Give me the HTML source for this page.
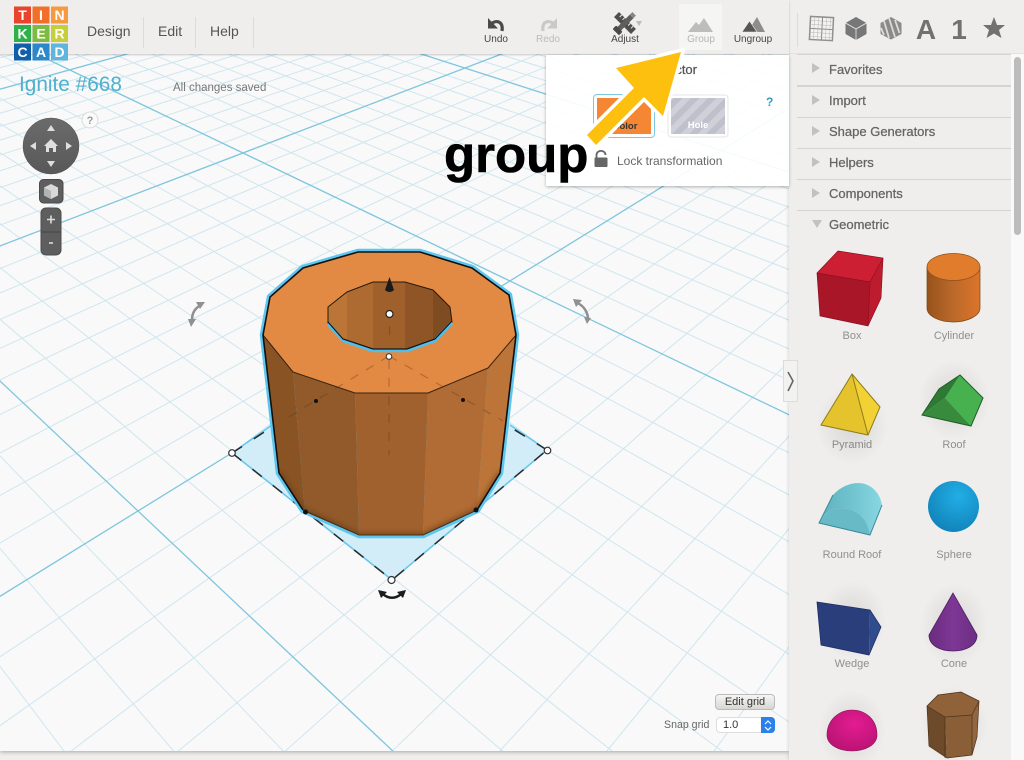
<!DOCTYPE html>
<html><head><meta charset="utf-8"><title>Tinkercad</title>
<style>
html,body{margin:0;padding:0;background:#efeeec;width:1024px;height:760px;overflow:hidden}
body{font-family:"Liberation Sans",sans-serif;position:relative;color:#555}
.t{position:absolute;white-space:nowrap;line-height:1}
.c{transform:translateX(-50%)}
.lbl{font-size:11px;color:#8f8f8f}
.tool{font-size:10px;color:#444}
.menu{font-size:14px;color:#555}
.div{position:absolute;background:#dcdbd9;width:1px}
.item{font-size:13px;color:#646464;left:829px;-webkit-text-stroke:.25px #646464}
.hr{position:absolute;left:797px;width:214px;height:1px;background:#d5d4d2}
.tri{position:absolute;left:812px;width:0;height:0;border-left:8px solid #c2c1bf;border-top:5px solid transparent;border-bottom:5px solid transparent}
.abs{position:absolute;left:0;top:0}
</style></head><body>
<!-- canvas -->
<div style="position:absolute;left:0;top:54px;width:789px;height:697px;background:#f9f9f9;box-shadow:0 1px 4px rgba(0,0,0,.3)"></div>
<svg class="abs" width="1024" height="760" style="clip-path:inset(54px 235px 9px 0)">
<g id="minor" stroke="#cfe6ef" stroke-width="1" fill="none"></g>
<g id="major" stroke="#7ec5de" stroke-width="1.3" fill="none"></g>
</svg>

<!-- sidebar -->
<div style="position:absolute;left:789px;top:54px;width:235px;height:706px;background:#efeeec;box-shadow:-1px 0 3px rgba(0,0,0,.12)"></div>
<div style="position:absolute;left:1011px;top:54px;width:13px;height:706px;background:#f9f9f9"></div>
<div style="position:absolute;left:1014px;top:57px;width:7px;height:178px;background:#bcbcbc;border-radius:4px"></div>
<div class="hr" style="top:54px"></div><div class="hr" style="top:85px;height:2px"></div><div class="hr" style="top:117px"></div><div class="hr" style="top:148px"></div><div class="hr" style="top:179px"></div><div class="hr" style="top:210px"></div>
<div class="tri" style="top:63px"></div><div class="tri" style="top:95px"></div><div class="tri" style="top:126px"></div><div class="tri" style="top:157px"></div><div class="tri" style="top:188px"></div>
<div style="position:absolute;left:812px;top:220px;width:0;height:0;border-top:8px solid #c2c1bf;border-left:5px solid transparent;border-right:5px solid transparent"></div>
<div class="t item" style="top:63px">Favorites</div>
<div class="t item" style="top:94px">Import</div>
<div class="t item" style="top:125px">Shape Generators</div>
<div class="t item" style="top:156px">Helpers</div>
<div class="t item" style="top:187px">Components</div>
<div class="t item" style="top:218px">Geometric</div>
<div class="t lbl c" style="left:852px;top:331px">Box</div>
<div class="t lbl c" style="left:954px;top:331px">Cylinder</div>
<div class="t lbl c" style="left:852px;top:440px">Pyramid</div>
<div class="t lbl c" style="left:954px;top:440px">Roof</div>
<div class="t lbl c" style="left:852px;top:550px">Round Roof</div>
<div class="t lbl c" style="left:954px;top:550px">Sphere</div>
<div class="t lbl c" style="left:852px;top:659px">Wedge</div>
<div class="t lbl c" style="left:954px;top:659px">Cone</div>

<!-- header -->
<div style="position:absolute;left:0;top:0;width:1024px;height:54px;background:#efeeec;border-bottom:1px solid #e2e1df;box-sizing:border-box"></div>
<div style="position:absolute;left:0;top:0;width:789px;height:54px;background:#efeeec;box-shadow:0 1px 2px rgba(0,0,0,.2)"></div>
<div style="position:absolute;left:679px;top:4px;width:43px;height:46px;background:#f5f5f4"></div>
<div class="div" style="left:143px;top:17px;height:31px"></div>
<div class="div" style="left:195px;top:17px;height:31px"></div>
<div class="div" style="left:253px;top:17px;height:31px"></div>
<div class="div" style="left:797px;top:13px;height:34px"></div>
<div class="t menu" style="left:87px;top:24px">Design</div>
<div class="t menu" style="left:158px;top:24px">Edit</div>
<div class="t menu" style="left:210px;top:24px">Help</div>
<div class="t tool c" style="left:496px;top:35px">Undo</div>
<div class="t tool c" style="left:548px;top:35px;color:#bbb">Redo</div>
<div class="t tool c" style="left:625px;top:35px">Adjust</div>
<div class="t tool c" style="left:701px;top:35px;color:#b5b5b5">Group</div>
<div class="t tool c" style="left:753px;top:35px">Ungroup</div>
<div class="t" style="left:19px;top:75px;font-size:20.8px;color:#4fb1cd">Ignite #668</div>
<div class="t" style="left:173px;top:83px;font-size:11.5px;color:#777">All changes saved</div>

<!-- logo -->
<svg class="abs" width="80" height="64" style="font-family:'Liberation Sans',sans-serif;font-weight:bold;font-size:14px" text-anchor="middle" fill="#fff">
<rect x="14" y="6.5" width="17" height="17" fill="#e8442c"/><rect x="32.5" y="6.5" width="17" height="17" fill="#f26f2a"/><rect x="51" y="6.5" width="17" height="17" fill="#f59a3f"/>
<rect x="14" y="25" width="17" height="17" fill="#2eb14b"/><rect x="32.5" y="25" width="17" height="17" fill="#7fbb42"/><rect x="51" y="25" width="17" height="17" fill="#c5cf3a"/>
<rect x="14" y="43.5" width="17" height="17" fill="#0f60a9"/><rect x="32.5" y="43.5" width="17" height="17" fill="#2b88c9"/><rect x="51" y="43.5" width="17" height="17" fill="#5fb5dc"/>
<text x="22.5" y="20">T</text><text x="41" y="20">I</text><text x="59.5" y="20">N</text>
<text x="22.5" y="38.5">K</text><text x="41" y="38.5">E</text><text x="59.5" y="38.5">R</text>
<text x="22.5" y="57">C</text><text x="41" y="57">A</text><text x="59.5" y="57">D</text>
</svg>

<!-- toolbar icons, nav, model, sidebar shapes -->
<svg class="abs" width="1024" height="760">
<defs>
<radialGradient id="halo"><stop offset="0" stop-color="#000" stop-opacity=".1"/><stop offset="1" stop-color="#000" stop-opacity="0"/></radialGradient>
<linearGradient id="cyl"><stop offset="0" stop-color="#96521b"/><stop offset=".45" stop-color="#b8682a"/><stop offset="1" stop-color="#dc742a"/></linearGradient>
<linearGradient id="rr"><stop offset="0" stop-color="#5fb0bd"/><stop offset=".5" stop-color="#6fc3cf"/><stop offset="1" stop-color="#88d7e1"/></linearGradient>
<radialGradient id="sph" cx=".6" cy=".3" r=".8"><stop offset="0" stop-color="#22aee6"/><stop offset="1" stop-color="#0f7fb5"/></radialGradient>
<radialGradient id="dome" cx=".55" cy=".35" r=".75"><stop offset="0" stop-color="#e41c92"/><stop offset="1" stop-color="#b3126f"/></radialGradient>
<linearGradient id="cone"><stop offset="0" stop-color="#6a2c80"/><stop offset=".5" stop-color="#7d3794"/><stop offset="1" stop-color="#6c2e84"/></linearGradient>
<linearGradient id="nav" x1="0" y1="0" x2="0" y2="1"><stop offset="0" stop-color="#6b6b6b"/><stop offset="1" stop-color="#585858"/></linearGradient>
<pattern id="stripe" width="12" height="12" patternUnits="userSpaceOnUse" patternTransform="rotate(45)"><rect width="12" height="12" fill="#bfc0cb"/><rect width="6" height="12" fill="#cfd0d8"/></pattern>
<clipPath id="hole"><polygon points="328,307 347,292 373,282 405,282 433,290 450,307 452,322 435,340 407,350 373,350 343,340 328,323"/></clipPath>
<filter id="soft"><feGaussianBlur stdDeviation="2.500"/></filter>
<clipPath id="bodyclip"><polygon points="263,335 516,335 500,473 477,510 423,535 359,535 303,510 279,473"/></clipPath>
</defs>

<!-- undo -->
<polygon points="488,18 488,28.500 498,28.500" fill="#4a4a4a"/>
<path d="M491 24 C496 19.500 503.500 21 502 31" stroke="#4a4a4a" stroke-width="3.200" fill="none"/>
<!-- redo -->
<polygon points="557,18 557,28.500 547,28.500" fill="#c9c9c7"/>
<path d="M554 24 C549 19.500 541.500 21 543 31" stroke="#c9c9c7" stroke-width="3.200" fill="none"/>
<!-- adjust -->
<g transform="translate(625,23)">
<g transform="rotate(45)"><rect x="-12" y="-3.5" width="24" height="7" fill="#4f4f4f"/><path d="M-8-3.5v3M-4-3.5v3M0-3.5v3M4-3.5v3M8-3.5v3" stroke="#efeeec" stroke-width="1"/></g>
<g transform="rotate(-45)"><rect x="-10" y="-2.5" width="20" height="5" fill="#5e5e5e"/><rect x="-13" y="-4.5" width="5" height="9" rx="1" fill="#4a4a4a"/><rect x="9" y="-2.5" width="4" height="5" fill="#888"/></g>
</g>
<path d="M636 21 h6 l-3 5z" fill="#bbb"/>
<!-- group -->
<path d="M688 32 L696 22 L699 25 L704 18 L713 32 Z" fill="#bdbdbc"/>
<!-- ungroup -->
<path d="M757 17 L765 32 L748 32 L752 25 Z" fill="#8d8d8d"/>
<path d="M742 32 L749.500 21 L757 32Z" fill="#565656" stroke="#efeeec" stroke-width=".6"/>
<!-- right icons -->
<g transform="translate(810,17) rotate(3 11 11)" fill="#f3f2f0" stroke="#8e8e8e">
<rect x="0" y="0" width="23" height="23" stroke-width="1.5"/>
<path d="M4 0v23M8 0v23M12 0v23M16 0v23M20 0v23M0 4h23M0 8h23M0 12h23M0 16h23M0 20h23" stroke-width=".5" stroke="#b5b5b5" fill="none"/>
<path d="M12 0v23M0 12h23" stroke-width="1" fill="none"/>
</g>
<path d="M856 17 L866.5 23 L866.5 34 L856 40 L845.5 34 L845.5 23Z" fill="#777"/>
<path d="M845.5 23 L856 29 L866.5 23 M856 29 V40" stroke="#efeeec" stroke-width=".8" fill="none"/>
<path d="M891 17 L901.500 23 L901.500 34 L891 39.500 L880.500 34 L880.500 23Z" fill="#8a8a8a"/>
<path d="M884 21 L889 38 M889 18 L895 37 M895 20 L899.500 33 M881 28 L884 35" stroke="#dcdbd9" stroke-width="1.800" fill="none"/>
<text x="926" y="39" font-family="Liberation Sans" font-weight="bold" font-size="28" fill="#717171" text-anchor="middle">A</text>
<text x="959" y="39" font-family="Liberation Sans" font-weight="bold" font-size="28" fill="#717171" text-anchor="middle">1</text>
<path d="M994 17 L997 25 L1005 25 L999 30 L1001.5 38 L994 33.5 L986.500 38 L989 30 L983 25 L991 25Z" fill="#717171"/>

<!-- nav -->
<circle cx="51" cy="146" r="28" fill="url(#nav)" stroke="#555" stroke-width=".5"/>
<path d="M51 125l4 6h-8zM51 167l4-6h-8zM30 146l6-4v8zM72 146l-6-4v8z" fill="#dedede"/>
<path d="M51 139 L58 146 L56 146 L56 152 L53 152 L53 148 L49 148 L49 152 L46 152 L46 146 L44 146Z" fill="#e0e0e0"/>
<circle cx="90" cy="120" r="8" fill="#fafafa" stroke="#ddd"/>
<text x="90" y="124" font-family="Liberation Sans" font-size="11" font-weight="bold" fill="#999" text-anchor="middle">?</text>
<rect x="39.500" y="179.500" width="23.500" height="23.500" rx="4" fill="#5e5e5e" stroke="#4a4a4a"/>
<path d="M51 184l7 3.500v8l-7 3.500-7-3.500v-8z" fill="#d8d8d8"/><path d="M44 187.500l7 3.500v8l-7-3.500z" fill="#b3b3b3"/>
<rect x="41" y="208" width="20" height="47" rx="5" fill="#5e5e5e" stroke="#4d4d4d"/>
<path d="M41 232h20" stroke="#444"/>
<path d="M47 219.500h8M51 215.500v8" stroke="#ddd" stroke-width="1.600"/><path d="M49 243h4" stroke="#ddd" stroke-width="1.600"/>

<!-- rotation arrows -->
<path d="M201 305 C195 308 192 313 192 320" stroke="#909090" stroke-width="2.500" fill="none"/><path d="M205 302 L196 302 L200 309Z M188 319 L196 319 L191 327Z" fill="#909090"/>
<path d="M577 303 C583 305 588 312 588 319" stroke="#909090" stroke-width="2.500" fill="none"/><path d="M573 299 L582 300 L576 307Z M584 317 L591 318 L587 324Z" fill="#909090"/>

<!-- footprint -->
<polygon points="232,453 390,330 547,450 392,580" fill="#d2edf8"/>
<path d="M232 453 L272 425 M547 450 L510 425 M232 453 L392 580 L547 450" stroke="#66c8ee" stroke-width="1.600" fill="none"/>
<path d="M232 453 L392 580 L547 450 M232 453 L272 427 M547 450 L510 427" stroke="#2a2a2a" stroke-width="1.500" fill="none" stroke-dasharray="12 14"/>

<!-- body -->
<polygon points="263,335 270,297 303,268 358,252 420,252 472,268 509,295 516,335 500,473 477,510 423,535 359,535 303,510 279,473" fill="#5cc6ef" stroke="#5cc6ef" stroke-width="6.500" stroke-linejoin="round"/>
<polygon points="263,335 293,372 305,512 279,473" fill="#8a5324"/>
<polygon points="293,372 355,393 359,535 305,512" fill="#925a2a"/>
<polygon points="355,393 428,393 423,535 359,535" fill="#a1612e"/>
<polygon points="428,393 488,368 477,510 423,535" fill="#b16b34"/>
<polygon points="488,368 516,335 500,473 477,510" fill="#bc7438"/>
<g clip-path="url(#bodyclip)"><path d="M279 473 L303 510 L359 535 L423 535 L477 510 L500 473" stroke="#5c3414" stroke-opacity=".55" stroke-width="5" fill="none" filter="url(#soft)"/></g>
<polygon points="263,335 270,297 303,268 358,252 420,252 472,268 509,295 516,335 488,368 428,393 355,393 293,372" fill="#e28a43" stroke="#3a2412" stroke-width="1" stroke-linejoin="round"/>
<!-- outline -->
<path d="M263 335 L279 473 L303 510" stroke="#111" stroke-width="1.600" fill="none"/>
<path d="M516 335 L500 473 L477 510" stroke="#111" stroke-width="1.600" fill="none"/>
<path d="M303 510 L359 535 L423 535 L477 510" stroke="#4a2c14" stroke-width="1" fill="none"/>
<path d="M263 335 L270 297 L303 268 L358 252 L420 252 L472 268 L509 295 L516 335" stroke="#111" stroke-width="1.600" fill="none"/>
<!-- hole -->
<g clip-path="url(#hole)">
<rect x="325" y="280" width="32" height="72" fill="#bb7537"/>
<rect x="347" y="280" width="27" height="72" fill="#ad6a31"/>
<rect x="373" y="280" width="32" height="72" fill="#a0602c"/>
<rect x="405" y="280" width="29" height="72" fill="#8f5526"/>
<rect x="433" y="280" width="22" height="72" fill="#7f4c22"/>
</g>
<polygon points="328,307 347,292 373,282 405,282 433,290 450,307 452,322 435,340 407,350 373,350 343,340 328,323" fill="none" stroke="#2a1a0e" stroke-width="1"/>
<path d="M328 323 L343 340 L373 350 L407 350 L435 340 L452 322" stroke="#4fc0ec" stroke-width="3.500" fill="none" transform="translate(0,.5)"/>
<path d="M328 323 L343 340 L373 350 L407 350 L435 340 L452 322" stroke="#151515" stroke-width="1.200" fill="none" transform="translate(0,-1)"/>
<!-- inner dashes -->
<path d="M389 356 L287 418 M389 356 L503 421 M389 360 V455 M389.500 326 V340" stroke="#5a3415" stroke-opacity=".35" stroke-width="1.200" stroke-dasharray="9 9" fill="none"/>
<circle cx="316" cy="401" r="2" fill="#111"/><circle cx="463" cy="400" r="2" fill="#111"/>
<circle cx="305.500" cy="512" r="2.500" fill="#111"/><circle cx="476" cy="510" r="2.500" fill="#111"/>
<path d="M389.500 277 L394 290 Q389.500 294 385 290Z" fill="#1a1a1a"/>
<circle cx="389.500" cy="314" r="3.500" fill="#fff" stroke="#222" stroke-width="1.200"/>
<circle cx="389" cy="356.500" r="2.800" fill="#fff" stroke="#333" stroke-width="1"/>
<circle cx="232" cy="453" r="3.300" fill="#fff" stroke="#333" stroke-width="1.200"/>
<circle cx="547.500" cy="450.500" r="3.300" fill="#fff" stroke="#333" stroke-width="1.200"/>
<circle cx="391.500" cy="580" r="3.500" fill="#fff" stroke="#333" stroke-width="1.200"/>
<path d="M383 594 C388 599 396 599 401 594" stroke="#1c1c1c" stroke-width="2.500" fill="none"/><path d="M378 590 L387 592 L381 598Z M406 590 L397 592 L403 598Z" fill="#1c1c1c"/>

<!-- sidebar shapes -->
<ellipse cx="852" cy="425" rx="36" ry="40" fill="url(#halo)"/>
<ellipse cx="954" cy="400" rx="36" ry="40" fill="url(#halo)"/>
<ellipse cx="852" cy="620" rx="34" ry="40" fill="url(#halo)"/>
<ellipse cx="954" cy="625" rx="34" ry="42" fill="url(#halo)"/>
<ellipse cx="852" cy="730" rx="34" ry="40" fill="url(#halo)"/>
<ellipse cx="954" cy="725" rx="34" ry="40" fill="url(#halo)"/>
<!-- box -->
<polygon points="838,251 883,258 870,282 817,273" fill="#cc1f33"/>
<polygon points="817,273 870,282 868,326 820,316" fill="#a81628"/>
<polygon points="883,258 870,282 868,326 881,298" fill="#bd1c2f"/>
<path d="M838 251 L883 258 L881 298 L868 326 L820 316 L817 273Z M817 273 L870 282 L883 258 M870 282 L868 326" fill="none" stroke="#8c1020" stroke-width=".7"/>
<!-- cylinder -->
<path d="M927 267 V308 C927 316 939 322 953 322 C967 322 980 316 980 308 V267Z" fill="url(#cyl)" stroke="#7c4314" stroke-width=".7"/>
<ellipse cx="953.500" cy="267" rx="26.500" ry="13.500" fill="#e07c2c" stroke="#8d4f1b" stroke-width=".7"/>
<!-- pyramid -->
<polygon points="852,374 821,425 868,435" fill="#e4c32c"/>
<polygon points="852,374 880,407 868,435" fill="#f2d134"/>
<path d="M852 374 L880 407 L868 435 L821 425Z M852 374 L868 435" fill="none" stroke="#8d7c1d" stroke-width="1"/>
<!-- roof -->
<polygon points="960,375 983,398 971,426 945,398" fill="#47b14f"/>
<polygon points="960,375 945,398 922,415 939,389" fill="#2e7a34"/>
<polygon points="945,398 971,426 922,415" fill="#388a3c"/>
<path d="M960 375 L983 398 L971 426 L922 415 L939 389Z" fill="none" stroke="#1f5f27" stroke-width="1"/>
<!-- round roof -->
<path d="M819 523 L833 495 C840 487 850 483 858 483 C870 483 880 492 882 505 L870 535 C868 520 858 508 840 508 C830 508 823 515 819 523Z" fill="url(#rr)"/>
<path d="M819 523 C823 515 830 508 840 508 C858 508 868 520 870 535Z" fill="#68bac6"/>
<path d="M833 495 L819 523 L870 535 L882 505" stroke="#3b8a97" stroke-width="1" fill="none"/>
<!-- sphere -->
<circle cx="953.500" cy="506.500" r="25.500" fill="url(#sph)"/>
<!-- wedge -->
<polygon points="817,602 870,610 869,655 821,645" fill="#2a3e7c"/>
<polygon points="870,610 881,627 869,655" fill="#2f4c8c"/>
<path d="M817 602 L870 610 L881 627 L869 655 L821 645Z" fill="none" stroke="#1f2f66" stroke-width=".8"/>
<!-- cone -->
<path d="M953 593 L929 635 C929 646 941 651 953 651 C965 651 977 646 977 635Z" fill="url(#cone)" stroke="#4f1f62" stroke-width=".8"/>
<!-- half sphere -->
<path d="M827 735 C827 720 839 710 852 710 C866 710 877 720 877 735 C877 745 865 751 852 751 C839 751 827 745 827 735Z" fill="url(#dome)" stroke="#8e0d58" stroke-width=".6"/>
<!-- hex prism -->
<polygon points="927,706 945,717 947,758 929,746" fill="#6c4a2a"/>
<polygon points="945,717 972,715 972,755 947,758" fill="#8a5f37"/>
<polygon points="972,715 979,701 977,737 972,755" fill="#916640"/>
<polygon points="927,706 938,695 961,692 979,701 972,715 945,717" fill="#8f6239"/>
<path d="M927 706 L938 695 L961 692 L979 701 L977 737 L972 755 L947 758 L929 746Z M927 706 L945 717 L972 715 L979 701 M945 717 V758 M972 715 V755" fill="none" stroke="#4d3219" stroke-width=".7"/>
<!-- expander -->
<rect x="783.500" y="360.500" width="14" height="41" fill="#f2f2f1" stroke="#dcdcda"/>
<path d="M788 372 L793 381 L788 391" stroke="#666" stroke-width="1.600" fill="none"/>
</svg>

<!-- grid controls -->
<div class="t" style="left:715px;top:694px;width:60px;height:16px;box-sizing:border-box;border:1px solid #bbb;border-radius:4px;background:linear-gradient(#f6f5f3,#d8d6d2);font-size:11px;color:#333;text-align:center;line-height:14px">Edit grid</div>
<div class="t" style="left:664px;top:720px;font-size:10.6px;color:#666">Snap grid</div>
<div class="t" style="left:716px;top:717px;width:59px;height:16px;box-sizing:border-box;border:1px solid #ddd;border-radius:4px;background:#fff;font-size:11px;color:#333;line-height:15px;padding-left:6px;overflow:hidden">1.0</div>
<div style="position:absolute;left:761px;top:717px;width:14px;height:16px;background:#2b80ea;border-radius:0 4px 4px 0"></div>
<svg class="abs" width="1024" height="760"><path d="M765 724 l3-3 3 3 M765 727 l3 3 3-3" stroke="#fff" stroke-width="1.200" fill="none"/></svg>

<!-- inspector -->
<div style="position:absolute;left:546px;top:55px;width:243px;height:131px;background:rgba(255,255,255,.93);box-shadow:0 1px 3px rgba(0,0,0,.3)"></div>
<div class="t" style="right:327px;top:63px;font-size:13px;color:#555;-webkit-text-stroke:.25px #555">Inspector</div>
<div style="position:absolute;left:594px;top:95px;width:60px;height:42px;box-sizing:border-box;background:#f58634;border:3px solid #fff;outline:1.500px solid #7cc8e0;border-radius:3px"></div>
<div class="t c" style="left:625px;top:122px;font-size:9.5px;font-weight:bold;color:#333">Color</div>
<svg class="abs" width="1024" height="760"><rect x="668" y="95" width="60" height="42" rx="3" fill="#fff" stroke="#e6e6e6"/><rect x="671" y="98" width="54" height="36" fill="url(#stripe)"/></svg>
<div class="t c" style="left:698px;top:121px;font-size:9.500px;font-weight:bold;color:#fff">Hole</div>
<div class="t" style="left:766px;top:96px;font-size:12px;font-weight:bold;color:#2f9cc4">?</div>
<div class="t" style="left:617px;top:155px;font-size:12px;color:#666">Lock transformation</div>
<svg class="abs" width="1024" height="760">
<path d="M596.500 158 V155 C596.500 149.500 605.500 149.500 605.500 155" stroke="#666" stroke-width="1.800" fill="none"/>
<rect x="594.500" y="157.500" width="13" height="9.500" rx="1" fill="#666"/>
<polygon points="681,52 616,68 634,88 587,135 596,145 644,97 663,116" fill="#fdc00f" stroke="#fff" stroke-width="7" stroke-linejoin="miter" paint-order="stroke"/>
</svg>
<div class="t" style="left:444px;top:129px;font-size:51px;font-weight:bold;color:#000;-webkit-text-stroke:.6px #000">group</div>

<script>
(function(){
var a=566.3,b=-278,c=138,d=-123,e=-119.7,f=511,g=0.381,h=0.373;
function P(u,v){var w=g*u+h*v+1;return [(a*u+b*v+c)/w,(d*u+e*v+f)/w];}
var mn=document.getElementById('minor'),mj=document.getElementById('major'),NS='http://www.w3.org/2000/svg';
function add(p,q,maj){var l=document.createElementNS(NS,'line');l.setAttribute('x1',p[0].toFixed(1));l.setAttribute('y1',p[1].toFixed(1));l.setAttribute('x2',q[0].toFixed(1));l.setAttribute('y2',q[1].toFixed(1));(maj?mj:mn).appendChild(l);}
for(var i=-15;i<=60;i++){
  var t=i/10,M=(i%10===0);
  var s0=Math.max(-1.5,(-0.85-g*t)/h);
  add(P(t,s0),P(t,6),M);
  var s1=Math.max(-1.5,(-0.85-h*t)/g);
  add(P(s1,t),P(6,t),M);
}
})();
</script>
</body></html>
